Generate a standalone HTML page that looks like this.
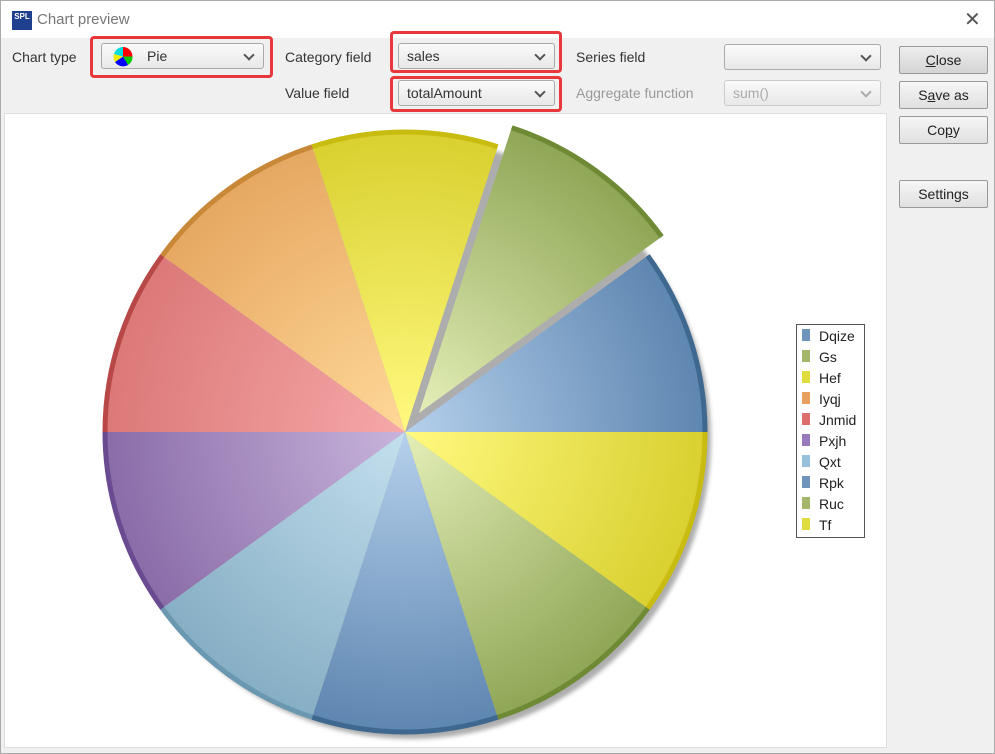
<!DOCTYPE html>
<html><head><meta charset="utf-8"><style>
*{margin:0;padding:0;box-sizing:border-box}
body{width:995px;height:754px;background:#f0f0f0;font-family:"Liberation Sans",Arial,sans-serif;font-size:14px;color:#333;position:relative;overflow:hidden}
.win{position:absolute;left:0;top:0;width:995px;height:754px;border:1px solid #aaa;background:#f0f0f0}
.title{position:absolute;left:0;top:0;width:993px;height:37px;background:#fff}
.title .t{position:absolute;left:36px;top:10px;font-size:15px;color:#777}
.logo{position:absolute;left:11px;top:10px;width:20px;height:19px;background:#1f3f8f;color:#fff;font-size:8px;font-weight:bold;text-align:center;line-height:12px}
.x{position:absolute;left:963px;top:6px;font-size:20px;color:#555}
.lbl{position:absolute;font-size:14px;color:#333}
.dis{color:#999}
.combo{position:absolute;height:26px;border:1px solid #aaa;border-radius:3px;background:linear-gradient(#fafafa,#e8e8e8);padding-left:8px;line-height:24px;font-size:14px}
.combo:after{content:"";position:absolute;right:10px;top:7px;width:6px;height:6px;border-right:2px solid #555;border-bottom:2px solid #555;transform:rotate(45deg)}
.combo.d{color:#aaa;border-color:#ccc}
.combo.d:after{border-color:#aaa}
.red{position:absolute;border:3px solid #e8383c;border-radius:4px}
.btn{position:absolute;left:898px;width:89px;height:28px;border:1px solid #999;border-radius:2px;background:linear-gradient(#f6f6f6,#e0e0e0);text-align:center;line-height:26px;font-size:14px;color:#222}
.chart{position:absolute;left:3px;top:112px;width:883px;height:635px;background:#fff;border:1px solid #ddd}
</style></head><body>
<div class="win">
<div class="title"><div class="logo">SPL</div><div class="t">Chart preview</div><div class="x">✕</div></div>
<div class="lbl" style="left:11px;top:48px">Chart type</div>
<div class="red" style="left:89px;top:35px;width:183px;height:42px"></div>
<div class="combo" style="left:100px;top:42px;width:163px;padding-left:45px">Pie
<svg style="position:absolute;left:8px;top:2px" width="26" height="21" viewBox="0 0 26 21"><path d="M13 10.5L13 1A9.5 9.5 0 0 1 22.5 10.5Z" fill="#f00"/><path d="M13 10.5L22.5 10.5A9.5 9.5 0 0 1 18 19Z" fill="#0c0"/><path d="M13 10.5L18 19A9.5 9.5 0 0 1 5 16Z" fill="#00f"/><path d="M13 10.5L5 16A9.5 9.5 0 0 1 4 8Z" fill="#ee0"/><path d="M13 10.5L4 8A9.5 9.5 0 0 1 13 1Z" fill="#0dd"/></svg></div>
<div class="lbl" style="left:284px;top:48px">Category field</div>
<div class="lbl" style="left:284px;top:84px">Value field</div>
<div class="red" style="left:389px;top:30px;width:172px;height:42px"></div>
<div class="red" style="left:389px;top:75px;width:172px;height:36px"></div>
<div class="combo" style="left:397px;top:42px;width:157px">sales</div>
<div class="combo" style="left:397px;top:79px;width:157px">totalAmount</div>
<div class="lbl" style="left:575px;top:48px">Series field</div>
<div class="lbl dis" style="left:575px;top:84px">Aggregate function</div>
<div class="combo" style="left:723px;top:43px;width:157px"></div>
<div class="combo d" style="left:723px;top:79px;width:157px">sum()</div>
<div class="btn" style="top:45px;background:linear-gradient(#eee,#d4d4d4)"><u>C</u>lose</div>
<div class="btn" style="top:80px">S<u>a</u>ve as</div>
<div class="btn" style="top:115px">Co<u>p</u>y</div>
<div class="btn" style="top:179px">Settings</div>
<div class="chart">
<svg width="883" height="635" viewBox="3 112 883 635" style="position:absolute;left:0;top:0">
<defs>
<filter id="b"><feGaussianBlur stdDeviation="2"/></filter>
<radialGradient id="gBlue" gradientUnits="userSpaceOnUse" cx="403" cy="430" r="300"><stop offset="0" stop-color="#b5d0ec"/><stop offset="1" stop-color="#5e86b0"/></radialGradient>
<radialGradient id="gGreen" gradientUnits="userSpaceOnUse" cx="403" cy="430" r="300"><stop offset="0" stop-color="#e4efb8"/><stop offset="1" stop-color="#8fa656"/></radialGradient>
<radialGradient id="gYel" gradientUnits="userSpaceOnUse" cx="403" cy="430" r="300"><stop offset="0" stop-color="#fffa80"/><stop offset="1" stop-color="#d9d030"/></radialGradient>
<radialGradient id="gOr" gradientUnits="userSpaceOnUse" cx="403" cy="430" r="300"><stop offset="0" stop-color="#ffd898"/><stop offset="1" stop-color="#e6a862"/></radialGradient>
<radialGradient id="gRed" gradientUnits="userSpaceOnUse" cx="403" cy="430" r="300"><stop offset="0" stop-color="#f6a8a8"/><stop offset="1" stop-color="#dc7878"/></radialGradient>
<radialGradient id="gPur" gradientUnits="userSpaceOnUse" cx="403" cy="430" r="300"><stop offset="0" stop-color="#c8b4dc"/><stop offset="1" stop-color="#8a6ca8"/></radialGradient>
<radialGradient id="gLb" gradientUnits="userSpaceOnUse" cx="403" cy="430" r="300"><stop offset="0" stop-color="#c4e0ee"/><stop offset="1" stop-color="#86aec4"/></radialGradient>
</defs>
<circle cx="409" cy="437" r="300" fill="#999" filter="url(#b)" opacity="0.8"/>
<g stroke-width="5" stroke-linejoin="round">
<path d="M403 430L703 430A300 300 0 0 0 645.7 253.7Z" fill="url(#gBlue)"/>
<path d="M403 430L645.7 253.7A300 300 0 0 0 495.7 144.7" transform="translate(14,-19)" fill="url(#gGreen)"/>
<path d="M403 430L495.7 144.7A300 300 0 0 0 310.3 144.7Z" fill="url(#gYel)"/>
<path d="M403 430L310.3 144.7A300 300 0 0 0 160.3 253.7Z" fill="url(#gOr)"/>
<path d="M403 430L160.3 253.7A300 300 0 0 0 103 430Z" fill="url(#gRed)"/>
<path d="M403 430L103 430A300 300 0 0 0 160.3 606.3Z" fill="url(#gPur)"/>
<path d="M403 430L160.3 606.3A300 300 0 0 0 310.3 715.3Z" fill="url(#gLb)"/>
<path d="M403 430L310.3 715.3A300 300 0 0 0 495.7 715.3Z" fill="url(#gBlue)"/>
<path d="M403 430L495.7 715.3A300 300 0 0 0 645.7 606.3Z" fill="url(#gGreen)"/>
<path d="M403 430L645.7 606.3A300 300 0 0 0 703 430Z" fill="url(#gYel)"/>
</g>
<g fill="none" stroke-width="5">
<path d="M703 430A300 300 0 0 0 645.7 253.7" stroke="#3e6890"/>
<path d="M659.7 234.7A300 300 0 0 0 509.7 125.7" stroke="#6f8a34"/>
<path d="M495.7 144.7A300 300 0 0 0 310.3 144.7" stroke="#c8bc10"/>
<path d="M310.3 144.7A300 300 0 0 0 160.3 253.7" stroke="#c88838"/>
<path d="M160.3 253.7A300 300 0 0 0 103 430" stroke="#b84848"/>
<path d="M103 430A300 300 0 0 0 160.3 606.3" stroke="#6a4a90"/>
<path d="M160.3 606.3A300 300 0 0 0 310.3 715.3" stroke="#6a98b0"/>
<path d="M310.3 715.3A300 300 0 0 0 495.7 715.3" stroke="#3e6890"/>
<path d="M495.7 715.3A300 300 0 0 0 645.7 606.3" stroke="#6f8a34"/>
<path d="M645.7 606.3A300 300 0 0 0 703 430" stroke="#c8bc10"/>
</g>
<rect x="794.5" y="322.5" width="68" height="213" fill="#fff" stroke="#555"/>
<g font-family="Liberation Sans,Arial,sans-serif" font-size="14" fill="#222">
<rect x="800" y="327" width="8" height="12" fill="#6f94bb"/><text x="817" y="339">Dqize</text>
<rect x="800" y="348" width="8" height="12" fill="#a3b66a"/><text x="817" y="360">Gs</text>
<rect x="800" y="369" width="8" height="12" fill="#e0dc40"/><text x="817" y="381">Hef</text>
<rect x="800" y="390" width="8" height="12" fill="#e8a060"/><text x="817" y="402">Iyqj</text>
<rect x="800" y="411" width="8" height="12" fill="#dc6e6e"/><text x="817" y="423">Jnmid</text>
<rect x="800" y="432" width="8" height="12" fill="#9a78c0"/><text x="817" y="444">Pxjh</text>
<rect x="800" y="453" width="8" height="12" fill="#96c0dc"/><text x="817" y="465">Qxt</text>
<rect x="800" y="474" width="8" height="12" fill="#6f94bb"/><text x="817" y="486">Rpk</text>
<rect x="800" y="495" width="8" height="12" fill="#a3b66a"/><text x="817" y="507">Ruc</text>
<rect x="800" y="516" width="8" height="12" fill="#e0dc40"/><text x="817" y="528">Tf</text>
</g>
</svg>
</div>
</div>
</body></html>
